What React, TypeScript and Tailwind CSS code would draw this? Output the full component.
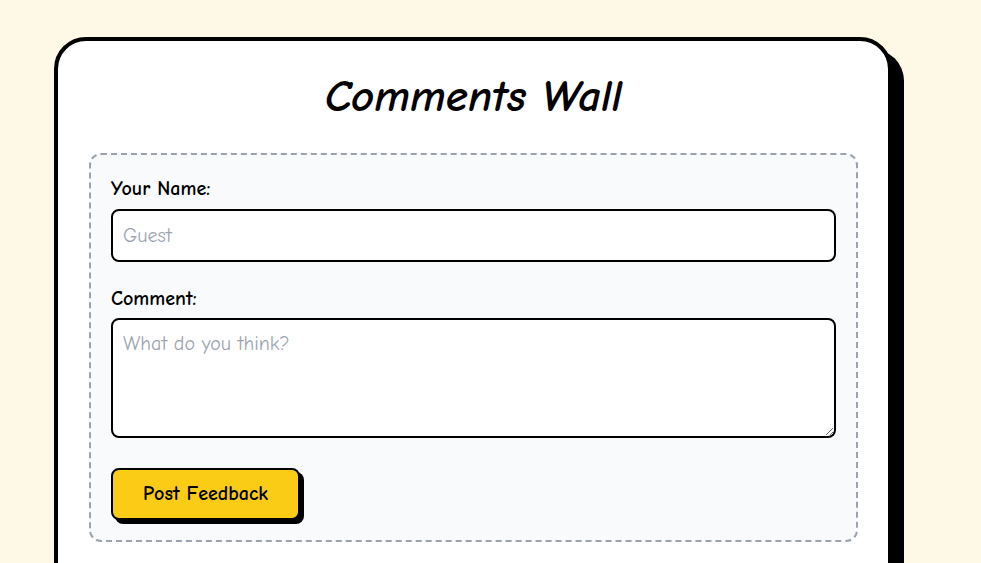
import React from "react";

export default function App() {
  const font = { fontFamily: '"Comic Neue", "Comic Sans MS", "Liberation Sans", sans-serif' };
  return (
    <div className="min-h-[563px] w-full bg-[#fef9e6] pl-[54px] pt-[37px] overflow-hidden" style={font}>
      <div className="w-[838px] h-[560px] bg-white border-4 border-black rounded-[32px] shadow-[12px_12px_0px_0px_#000] pt-[29px] pl-[31px] pr-[30px]">
        <h1 className="text-[45px] leading-[52px] font-bold italic text-black text-center mb-[31px]">
          Comments Wall
        </h1>
        <div className="border-2 border-dashed border-[#9ca3af] bg-[#f9fafb] rounded-xl p-5">
          <label className="block text-xl leading-7 font-bold text-black mb-1.5">Your Name:</label>
          <input
            type="text"
            placeholder="Guest"
            className="block w-full h-[53px] border-2 border-black rounded-lg bg-white px-2.5 text-xl text-black placeholder:text-[#9ca3af] outline-none"
          />
          <label className="block text-xl leading-7 font-bold text-black mt-[23px] mb-[5px]">Comment:</label>
          <textarea
            placeholder="What do you think?"
            className="block w-full h-[120px] border-2 border-black rounded-lg bg-white px-2.5 pt-2.5 pb-2 text-xl leading-7 text-black placeholder:text-[#9ca3af] outline-none"
          />
          <button className="mt-[30px] h-[52px] px-[30px] bg-[#facc15] border-2 border-black rounded-lg shadow-[4px_4px_0px_0px_#000] text-xl font-bold text-black">
            Post Feedback
          </button>
        </div>
      </div>
    </div>
  );
}
